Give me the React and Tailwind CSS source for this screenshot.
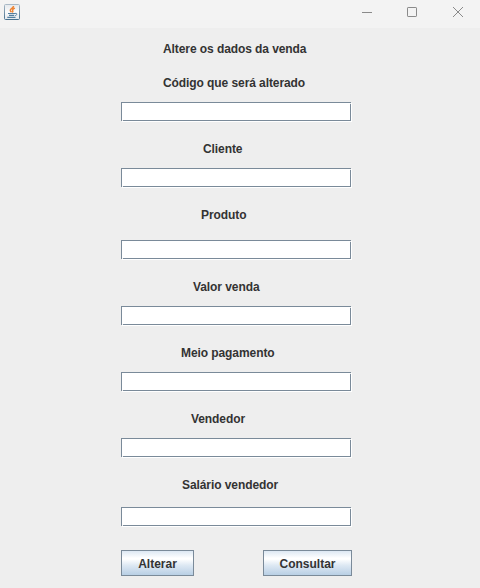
const fields = [
  { label: 'Código que será alterado', labelClass: 'mt-5 ml-[163px] w-[142px]', inputClass: 'mt-3' },
  { label: 'Cliente', labelClass: 'mt-5 ml-[203px] w-[39px]', inputClass: 'mt-3' },
  { label: 'Produto', labelClass: 'mt-5 ml-[201px] w-[45px]', inputClass: 'mt-[18px]' },
  { label: 'Valor venda', labelClass: 'mt-5 ml-[193px] w-[67px]', inputClass: 'mt-3' },
  { label: 'Meio pagamento', labelClass: 'mt-5 ml-[181px] w-[94px]', inputClass: 'mt-3' },
  { label: 'Vendedor', labelClass: 'mt-5 ml-[191px] w-[55px]', inputClass: 'mt-3' },
  { label: 'Salário vendedor', labelClass: 'mt-5 ml-[182px] w-[95px]', inputClass: 'mt-[15px]' },
];

function Label({ children, className }) {
  return (
    <div className={`h-[14px] text-xs leading-[14px] font-bold tracking-[-0.08px] whitespace-nowrap text-[#333333] ${className}`}>
      {children}
    </div>
  );
}

// Flush 3D border: dark outline, white highlight on the right and bottom, two light notches.
function TextField({ label, className }) {
  return (
    <div className={`relative ml-[121px] h-5 w-[231px] border-r border-b border-white ${className}`}>
      <input
        aria-label={label}
        className="block h-[19px] w-[230px] border border-[#7a8a99] bg-white px-1 text-xs outline-none"
      />
      <span className="absolute top-0 -right-px size-px bg-[#eeeeee]" />
      <span className="absolute top-px right-0 size-px bg-[#eeeeee]" />
      <span className="absolute -bottom-px left-0 size-px bg-[#eeeeee]" />
      <span className="absolute bottom-0 left-px size-px bg-[#eeeeee]" />
    </div>
  );
}

function MetalButton({ children, className }) {
  return (
    <button
      className={`h-[26px] border border-[#7a8a99] bg-[linear-gradient(to_bottom,#dde8f3_0%,#ffffff_30%,#ffffff_34%,#dde8f3_60%,#b8cfe5_100%)] pt-px text-xs leading-[14px] font-bold text-[#333333] ${className}`}
    >
      {children}
    </button>
  );
}

function JavaIcon() {
  return (
    <svg width="16" height="16" viewBox="0 0 16 16" fill="none">
      <defs>
        <linearGradient id="frame" x1="0" y1="0" x2="0" y2="1">
          <stop offset="0" stopColor="#a9b9c6" />
          <stop offset="1" stopColor="#48718f" />
        </linearGradient>
        <linearGradient id="face" x1="0" y1="0" x2="0" y2="1">
          <stop offset="0" stopColor="#e4e8ec" />
          <stop offset=".5" stopColor="#fafbfc" />
          <stop offset="1" stopColor="#e2e8ed" />
        </linearGradient>
      </defs>
      <rect x=".5" y=".5" width="15" height="15" rx="1" fill="url(#face)" stroke="url(#frame)" />
      <path d="M9.5 2C9.8 3.9 6.3 4.6 6.3 6.2c0 .9.7 1.3 1 2.1M10.9 4.1C9.3 4.8 8.3 5.6 8.7 6.4c.4.7.2 1.3-.4 2" stroke="#ee8434" strokeWidth="1.5" />
      <path d="M4 9.5h7M5 11.3h5.2M3.3 13.4h8.2" stroke="#547f9f" strokeWidth="1.15" />
      <path d="M11 9.4h1.2c1.1 0 1 1.7-1 2.2" stroke="#547f9f" strokeWidth="1" />
    </svg>
  );
}

export default function App() {
  return (
    <div className="h-[588px] w-[480px] overflow-hidden bg-[#eeeeee] font-['Liberation_Sans',Arial,sans-serif]">
      <header className="flex h-7 items-start justify-between bg-[#f3f3f3] pt-1 pr-4 pl-1">
        <JavaIcon />
        <div className="flex pt-[2px] text-[#8a8a8a]">
          <svg className="mr-[33px]" width="12" height="12" viewBox="0 0 12 12" fill="none" stroke="currentColor">
            <path d="M1 6.5h10" />
          </svg>
          <svg className="mr-[34px]" width="12" height="12" viewBox="0 0 12 12" fill="none" stroke="currentColor">
            <rect x="1.5" y="1.5" width="9" height="9" rx=".6" />
          </svg>
          <svg width="12" height="12" viewBox="0 0 12 12" fill="none" stroke="currentColor">
            <path d="M1 1l10 10M11 1L1 11" />
          </svg>
        </div>
      </header>
      <main className="flex flex-col">
        <Label className="mt-[14px] ml-[163px] w-[143px]">Altere os dados da venda</Label>
        {fields.map(({ label, labelClass, inputClass }) => (
          <div key={label} className="flex flex-col">
            <Label className={labelClass}>{label}</Label>
            <TextField label={label} className={inputClass} />
          </div>
        ))}
        <div className="mt-[23px] ml-[121px] flex gap-[69px]">
          <MetalButton className="w-[73px]">Alterar</MetalButton>
          <MetalButton className="w-[89px]">Consultar</MetalButton>
        </div>
      </main>
    </div>
  );
}
